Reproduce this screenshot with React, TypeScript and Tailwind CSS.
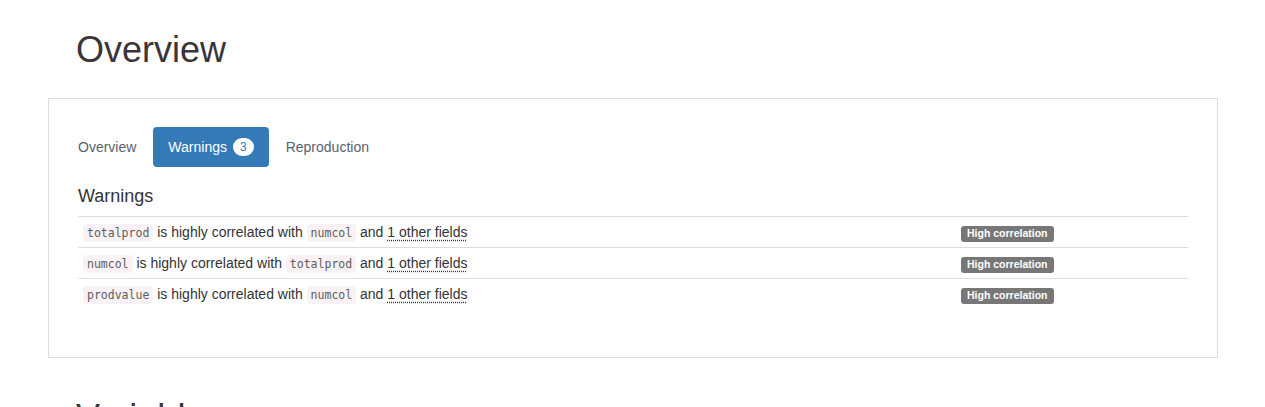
const warnings = [
  { field: "totalprod", other: "numcol" },
  { field: "numcol", other: "totalprod" },
  { field: "prodvalue", other: "numcol" },
];

const tabs = ["Overview", "Warnings", "Reproduction"];

function Code({ children }: { children: string }) {
  return (
    <code className="rounded-[4px] bg-[#f9f2f4] px-[4px] py-[2px] font-['DejaVu_Sans_Mono',monospace] text-[11.5px] leading-none text-[#5c5c5c]">
      {children}
    </code>
  );
}

function WarningRow({ field, other }: { field: string; other: string }) {
  return (
    <div className="flex h-[31px] items-center border-t border-[#ddd]">
      <div className="flex-1 px-[5px] leading-[20px]">
        <Code>{field}</Code> is highly correlated with <Code>{other}</Code> and{" "}
        <abbr className="underline decoration-dotted underline-offset-2" title="numcol">
          1 other fields
        </abbr>
      </div>
      <div className="w-[232px] px-[5px] leading-[20px]">
        <span className="inline-block rounded-[3px] bg-[#777] px-[6px] pt-[2px] pb-[3px] align-baseline text-[10.5px] leading-none font-bold text-white">
          High correlation
        </span>
      </div>
    </div>
  );
}

export default function App() {
  return (
    <div className="h-[407px] overflow-hidden bg-white pl-[48px] pr-[47px] font-['Liberation_Sans',Arial,sans-serif] text-[14px] text-[#333]">
      <h1 className="pt-[30px] pl-[28px] text-[36px] leading-[1.1] text-[#3b3538]">Overview</h1>

      <div className="mt-[28px] border border-[#ddd] px-[14px] pt-[28px] pb-[48px]">
        <ul className="flex gap-[2px]">
          {tabs.map((t) => (
            <li key={t}>
              <span
                className={`flex items-center rounded-[4px] px-[15px] py-[10px] leading-[20px] ${
                  t === "Warnings" ? "bg-[#337ab7] text-white" : "text-[#58616e]"
                }`}
              >
                {t}
                {t === "Warnings" && (
                  <span className="ml-[6px] rounded-[10px] bg-white px-[7px] py-[3px] text-[12px] leading-none text-[#337ab7]">
                    3
                  </span>
                )}
              </span>
            </li>
          ))}
        </ul>

        <div className="px-[15px]">
          <h4 className="mt-[20px] mb-[10px] text-[18px] leading-[1.1]">Warnings</h4>
          <div>
            {warnings.map((w) => (
              <WarningRow key={w.field} field={w.field} other={w.other} />
            ))}
          </div>
        </div>
      </div>

      <h1 className="mt-[40px] pl-[28px] text-[36px] leading-[1.1] text-[#3b3538]">Variables</h1>
    </div>
  );
}
